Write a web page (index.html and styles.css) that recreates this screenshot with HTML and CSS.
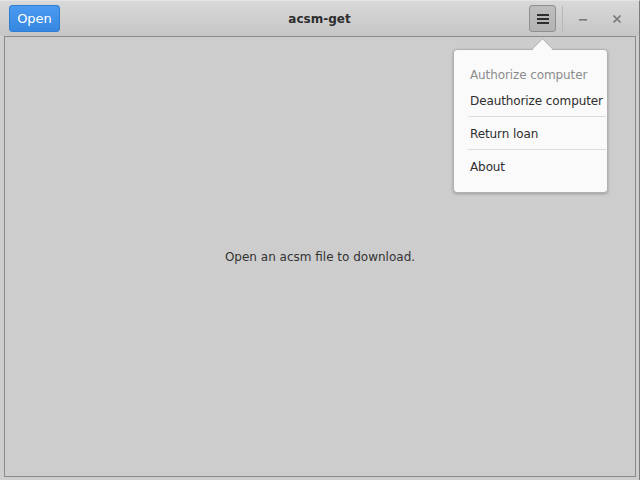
FILE: index.html
```html
<!DOCTYPE html>
<html>
<head>
<meta charset="utf-8">
<link rel="stylesheet" href="styles.css">
</head>
<body>
<div class="window">
  <header class="titlebar">
    <button class="btn-open">Open</button>
    <div class="title">acsm-get</div>
    <div class="right">
      <button class="btn-menu" aria-label="Menu">
        <svg width="12" height="10" viewBox="0 0 12 10"><rect x="0" y="0" width="12" height="2" fill="#2e2e2e"/><rect x="0" y="4" width="12" height="2" fill="#2e2e2e"/><rect x="0" y="8" width="12" height="2" fill="#2e2e2e"/></svg>
      </button>
      <span class="sep"></span>
      <button class="wbtn" aria-label="Minimize">
        <svg width="10" height="10" viewBox="0 0 10 10"><rect x="1" y="5" width="8" height="1.6" fill="#777"/></svg>
      </button>
      <button class="wbtn" aria-label="Close">
        <svg width="10" height="10" viewBox="0 0 10 10"><path d="M1.5 1.5 L8.5 8.5 M8.5 1.5 L1.5 8.5" stroke="#777" stroke-width="1.7"/></svg>
      </button>
    </div>
  </header>
  <main class="content">
    <p class="msg">Open an acsm file to download.</p>
  </main>
  <div class="popover">
    <div class="item disabled">Authorize computer</div>
    <div class="item">Deauthorize computer</div>
    <div class="divider"></div>
    <div class="item">Return loan</div>
    <div class="divider"></div>
    <div class="item">About</div>
  </div>
</div>
</body>
</html>
```
FILE: styles.css
```css
html, body { margin: 0; padding: 0; }
body {
  width: 640px; height: 480px; overflow: hidden;
  font-family: "DejaVu Sans", sans-serif;
  font-size: 12px;
  background: #cecece;
}
.window {
  position: relative;
  width: 640px; height: 480px;
  box-sizing: border-box;
  border-right: 1px solid #7d7d7d;
  border-top: 1px solid #e4e4e4;
  display: flex; flex-direction: column;
  background: #cecece;
}
.titlebar {
  height: 35px;
  box-sizing: border-box;
  display: flex; align-items: center;
  padding: 0 9px 0 9px;
  background: linear-gradient(#d8d8d8, #c6c6c6);
  position: relative;
}
.btn-open {
  width: 51px; height: 27px;
  border: 1px solid #2f7ed0;
  border-radius: 3px;
  background: linear-gradient(#4a9af0, #3687e0);
  color: #fff;
  font-family: inherit; font-size: 13px;
  padding: 0; margin-top: 0;
}
.title {
  position: absolute; left: 0; right: 0; top: 0; bottom: 0;
  display: flex; align-items: center; justify-content: center;
  font-weight: bold; font-size: 12px; color: #2e2e2e;
  pointer-events: none;
}
.right { margin-left: auto; display: flex; align-items: center; }
.btn-menu {
  width: 27px; height: 27px; padding: 0;
  border: 1px solid #8f8f8f; border-radius: 3px;
  background: linear-gradient(#bdbdbd, #b3b3b3);
  display: flex; align-items: center; justify-content: center;
}
.sep { width: 1px; height: 26px; background: #b8b8b8; margin: 0 7px 0 6px; }
.wbtn {
  width: 26px; height: 26px; padding: 0; border: none; background: transparent;
  display: flex; align-items: center; justify-content: center;
}
.wbtn + .wbtn { margin-left: 8px; }
.content {
  flex: 1;
  margin: 0 3px 3px 4px;
  border: 1px solid #8a8a8a;
  background: #cdcdcd;
  display: flex; align-items: center; justify-content: center;
}
.msg { margin: 0; color: #333; font-size: 12px; }
.popover {
  position: absolute; left: 453px; top: 48px;
  width: 155px; box-sizing: border-box;
  background: #fafafa;
  border: 1px solid #b0b0b0;
  border-radius: 4px;
  box-shadow: 0 1px 3px rgba(0,0,0,0.25);
  padding: 16px 2px 8px 16px;
}
.popover::before {
  content: ""; position: absolute; left: 81px; top: -9px;
  width: 14px; height: 14px; background: #fafafa;
  border-left: 1px solid #b0b0b0; border-top: 1px solid #b0b0b0;
  transform: rotate(45deg);
}
.item { font-size: 12px; color: #2e2e2e; height: 26px; line-height: 18px; padding-left: 0; white-space: nowrap; letter-spacing: -0.1px; }
.item.disabled { color: #8c8c8c; }
.divider { height: 1px; background: #dcdcdc; margin: -2px 0 8px -2px; width: 138px; }
```
